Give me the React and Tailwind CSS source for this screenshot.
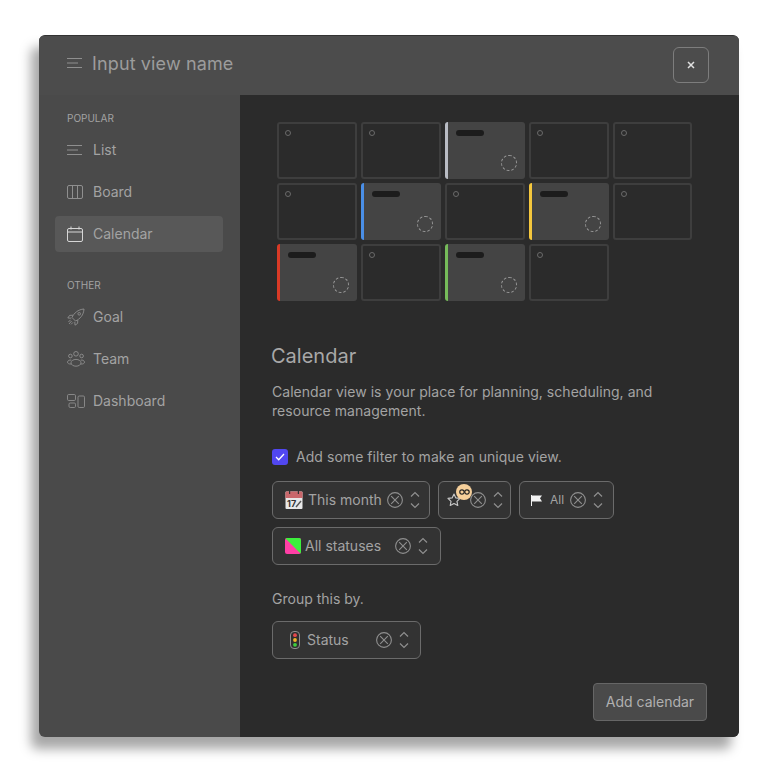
import React from "react";

const FONT = { fontFamily: "Inter, 'Liberation Sans', sans-serif" };

function ListIcon({ className }) {
  return (
    <svg className={className} width="16" height="12" viewBox="0 0 16 12" fill="none" stroke="currentColor" strokeWidth="1">
      <path d="M0 1.5h15M0 6h11M0 10.5h15" />
    </svg>
  );
}
function BoardIcon() {
  return (
    <svg width="16" height="14" viewBox="0 0 16 14" fill="none" stroke="currentColor" strokeWidth="1">
      <rect x="0.5" y="0.5" width="15" height="13" rx="1.5" />
      <path d="M5.5 0.5v13M10.5 0.5v13" />
    </svg>
  );
}
function CalendarIcon() {
  return (
    <svg width="16" height="16" viewBox="0 0 16 16" fill="none" stroke="#d6d6d6" strokeWidth="1">
      <rect x="0.5" y="2.5" width="15" height="13" rx="1.5" />
      <path d="M0.5 6h15M4 0.5v3M12 0.5v3" />
    </svg>
  );
}
function RocketIcon() {
  return (
    <svg width="18" height="18" viewBox="0 0 18 18" fill="none" stroke="currentColor" strokeWidth="0.9" strokeLinejoin="round">
      <path d="M5 9.5C7 5 11 1.5 17 1c-.3 6-4 10-8.5 12L5 9.5z" />
      <circle cx="12.2" cy="5.8" r="1.3" />
      <path d="M6 7.2 2.6 7.4.8 10l3.4.2M10.8 12l-.2 3.4L8 17.2l-.2-3.4" />
      <path d="M3.6 11.8 1.4 14M4.6 13l-2.6 3M6 14.4l-2 2" />
    </svg>
  );
}
function TeamIcon() {
  return (
    <svg width="18" height="16" viewBox="0 0 18 16" fill="none" stroke="currentColor" strokeWidth="0.9">
      <circle cx="9" cy="2.8" r="2.3" />
      <circle cx="3.4" cy="5" r="1.8" />
      <circle cx="14.6" cy="5" r="1.8" />
      <ellipse cx="9" cy="11.8" rx="5" ry="3.4" />
      <path d="M4.4 9.2C2.4 8.6.6 9.6.5 11.2c0 1.3 1.6 2 3.6 1.8M13.6 9.2c2-.6 3.8.4 3.9 2 0 1.3-1.6 2-3.6 1.8" />
    </svg>
  );
}
function DashboardIcon() {
  return (
    <svg width="18" height="14" viewBox="0 0 18 14" fill="none" stroke="currentColor" strokeWidth="0.9">
      <rect x="0.5" y="0.5" width="8" height="6" rx="1.2" />
      <rect x="2" y="9" width="6.5" height="4.5" rx="1.2" />
      <rect x="11" y="2" width="6.5" height="11.5" rx="1.2" />
    </svg>
  );
}

function ClearIcon() {
  return (
    <svg className="shrink-0" width="16" height="16" viewBox="0 0 16 16" fill="none" stroke="#8f8f8f" strokeWidth="1.1">
      <circle cx="8" cy="8" r="7.4" />
      <path d="M4.2 4.2l7.6 7.6M11.8 4.2l-7.6 7.6" />
    </svg>
  );
}
function UpDown() {
  return (
    <svg className="shrink-0" width="10" height="18" viewBox="0 0 10 18" fill="none" stroke="#8f8f8f" strokeWidth="1.2">
      <path d="M1 5.5 5 1.5l4 4M1 12.5l4 4 4-4" />
    </svg>
  );
}

function CalEmoji() {
  return (
    <svg className="shrink-0" width="18" height="20" viewBox="0 0 18 20">
      <rect x="0.5" y="1.5" width="17" height="17.5" rx="1" fill="#e8e8e8" />
      <path d="M0.5 2.5a1 1 0 0 1 1-1h15a1 1 0 0 1 1 1V8h-17z" fill="#c9676b" />
      <rect x="4" y="0.5" width="1.2" height="3.5" fill="#333" />
      <rect x="12.8" y="0.5" width="1.2" height="3.5" fill="#333" />
      <text x="2" y="16.5" fontSize="9" fontWeight="700" fill="#333" fontFamily="Inter, sans-serif">17</text>
      <path d="M11 17l5-6" stroke="#555" strokeWidth="1.4" />
    </svg>
  );
}
function StarIcon() {
  return (
    <svg width="14" height="14" viewBox="0 0 16 16" fill="none" stroke="#c8c8c8" strokeWidth="1.3" strokeLinejoin="round">
      <path d="M8 1.2l2.1 4.4 4.8.6-3.5 3.3.9 4.8L8 12l-4.3 2.3.9-4.8L1.1 6.2l4.8-.6z" />
    </svg>
  );
}
function FlagIcon() {
  return (
    <svg width="11" height="11" viewBox="0 0 11 11" fill="#f2f2f2">
      <path d="M0 0h1v11H0zM1 0.5h10L9 3.2 11 6.5H1z" />
    </svg>
  );
}
function StatusSwatch() {
  return (
    <svg className="shrink-0" width="16" height="16" viewBox="0 0 16 16">
      <defs>
        <clipPath id="sw"><rect width="16" height="16" rx="2" /></clipPath>
      </defs>
      <g clipPath="url(#sw)">
        <rect width="16" height="16" fill="#ff3fa6" />
        <path d="M0 0h16v16z" fill="#3cf03c" />
      </g>
    </svg>
  );
}
function TrafficLight() {
  return (
    <svg className="shrink-0" width="10" height="18" viewBox="0 0 10 18">
      <rect x="0.5" y="0.5" width="9" height="17" rx="3.5" fill="#2f2f2f" stroke="#8f8f8f" />
      <circle cx="5" cy="4.2" r="1.9" fill="#e5484d" />
      <circle cx="5" cy="9" r="1.9" fill="#f0b429" />
      <circle cx="5" cy="13.8" r="1.9" fill="#3ecf3e" />
    </svg>
  );
}

const popular = [
  { label: "List", icon: <ListIcon /> },
  { label: "Board", icon: <BoardIcon /> },
  { label: "Calendar", icon: <CalendarIcon />, active: true },
];
const other = [
  { label: "Goal", icon: <RocketIcon /> },
  { label: "Team", icon: <TeamIcon /> },
  { label: "Dashboard", icon: <DashboardIcon /> },
];

function NavItem({ item }) {
  return (
    <div className={"flex items-center h-9 rounded pl-3 text-[14px] text-[#a3a3a3] " + (item.active ? "bg-[#585858]" : "")}>
      <span className="w-[26px] flex items-center text-[#8f8f8f]">{item.icon}</span>
      <span className="pb-[2px]">{item.label}</span>
    </div>
  );
}

// null = empty day, otherwise the colour of the event's left edge
const days = [
  null, null, "border-l-[#b9bcc4]", null, null,
  null, "border-l-[#4a8fe7]", null, "border-l-[#f5c73d]", null,
  "border-l-[#d93a26]", null, "border-l-[#76bb5a]", null,
];

function Day({ edge }) {
  if (!edge) {
    return (
      <div className="h-[57px] rounded-[3px] border-2 border-[#3e3e3e] p-[6px]">
        <div className="size-[6px] rounded-full border border-[#6a6a6a]" />
      </div>
    );
  }
  return (
    <div className={"h-[57px] rounded-[3px] bg-[#444444] border-l-[3px] px-2 pt-2 pb-2 flex flex-col justify-between " + edge}>
      <div className="w-7 h-[6px] rounded-full bg-[#1c1c1c]" />
      <div className="size-4 self-end rounded-full border border-dashed border-[#9a9a9a]" />
    </div>
  );
}

function Select({ children, className }) {
  return (
    <div className={"h-[38px] flex items-center rounded-md border border-[#6b6b6b] bg-[#333333] text-[14px] text-[#a3a3a3] " + className}>
      {children}
    </div>
  );
}

export default function App() {
  return (
    <div className="min-h-[771px] bg-white pl-[39px] pt-[35px]" style={FONT}>
      <div className="w-[700px] h-[702px] rounded-md overflow-hidden shadow-[-8px_12px_12px_rgba(0,0,0,0.35)] bg-[#4a4a4a] flex flex-col border-t border-[#333333]">
        <div className="h-[59px] shrink-0 flex items-center justify-between pl-7 pr-[30px] pb-px bg-[#4c4c4c]">
          <div className="flex items-center gap-[9px] mb-1 text-[18px] tracking-[0.13px] text-[#9c9c9c]">
            <ListIcon className="text-[#8f8f8f]" />
            Input view name
          </div>
          <div className="size-9 flex items-center justify-center rounded-md border border-[#7d7d7d] text-[#e0e0e0]">
            <svg width="8" height="8" viewBox="0 0 8 8" stroke="currentColor" strokeWidth="1.5">
              <path d="M1 1l6 6M7 1L1 7" />
            </svg>
          </div>
        </div>
        <div className="flex flex-1 min-h-0">
          <aside className="w-[201px] shrink-0 pl-4 pr-[17px] pt-[17px]">
            <div className="text-[10px] leading-3 text-[#a3a3a3] pl-3 mb-[8px]">POPULAR</div>
            <div className="flex flex-col gap-[6px]">
              {popular.map((i) => <NavItem key={i.label} item={i} />)}
            </div>
            <div className="text-[10px] leading-3 text-[#a3a3a3] pl-3 mt-[27px] mb-[8px]">OTHER</div>
            <div className="flex flex-col gap-[6px]">
              {other.map((i) => <NavItem key={i.label} item={i} />)}
            </div>
          </aside>
          <main className="flex-1 bg-[#2b2b2b] pl-8 pr-8 pt-[27px]">
            <div className="ml-[5px] grid grid-cols-[repeat(4,80px)_79px] gap-x-1 gap-y-1">
              {days.map((edge, i) => <Day key={i} edge={edge} />)}
            </div>
            <h2 className="mt-[43px] -ml-px text-[20px] leading-[24px] text-[#a8a8a8]">Calendar</h2>
            <p className="mt-[14px] text-[14px] leading-[19px] tracking-[0.04px] text-[#a3a3a3]">
              Calendar view is your place for planning, scheduling, and<br />resource management.
            </p>
            <label className="mt-[26px] flex items-center gap-2 text-[14px] tracking-[0.05px] text-[#a3a3a3]">
              <span className="size-4 rounded-[3px] bg-[#5147f0] flex items-center justify-center">
                <svg width="10" height="8" viewBox="0 0 10 8" fill="none" stroke="#fff" strokeWidth="1.3">
                  <path d="M1 4l2.7 2.7L9 1" />
                </svg>
              </span>
              Add some filter to make an unique view.
            </label>
            <div className="mt-[14px] flex flex-wrap gap-2 w-[400px]">
              <Select className="w-[158px] pl-3">
                <CalEmoji />
                <span className="ml-[5px] w-[79px] pb-[2px]">This month</span>
                <ClearIcon />
                <span className="ml-[7px]"><UpDown /></span>
              </Select>
              <Select className="w-[73px] pl-2 relative">
                <StarIcon />
                <span className="absolute left-[17px] top-[2px] size-4 rounded-full bg-[#f5cf9a] flex items-center justify-center">
                  <svg width="11" height="6" viewBox="0 0 11 6" fill="none" stroke="#222" strokeWidth="1.2">
                    <circle cx="3" cy="3" r="2.2" />
                    <circle cx="8" cy="3" r="2.2" />
                  </svg>
                </span>
                <span className="ml-[9px]"><ClearIcon /></span>
                <span className="ml-[7px]"><UpDown /></span>
              </Select>
              <Select className="w-[95px] pl-[11px]">
                <FlagIcon />
                <span className="ml-2 w-[20px] text-[12px]">All</span>
                <ClearIcon />
                <span className="ml-[7px]"><UpDown /></span>
              </Select>
              <Select className="w-[169px] pl-3">
                <StatusSwatch />
                <span className="ml-1 w-[90px] pb-[2px]">All statuses</span>
                <ClearIcon />
                <span className="ml-[7px]"><UpDown /></span>
              </Select>
            </div>
            <div className="mt-[24px] text-[14px] leading-[19px] text-[#a3a3a3]">Group this by.</div>
            <div className="mt-[13px]">
              <Select className="w-[149px] pl-[17px]">
                <TrafficLight />
                <span className="ml-[7px] w-[69px] pb-[2px]">Status</span>
                <ClearIcon />
                <span className="ml-[7px]"><UpDown /></span>
              </Select>
            </div>
            <div className="mt-6 flex justify-end">
              <button className="h-[38px] w-[114px] pb-[2px] rounded bg-[#4a4a4a] border border-[#666666] text-[14px] text-[#b0b0b0]">
                Add calendar
              </button>
            </div>
          </main>
        </div>
      </div>
    </div>
  );
}
